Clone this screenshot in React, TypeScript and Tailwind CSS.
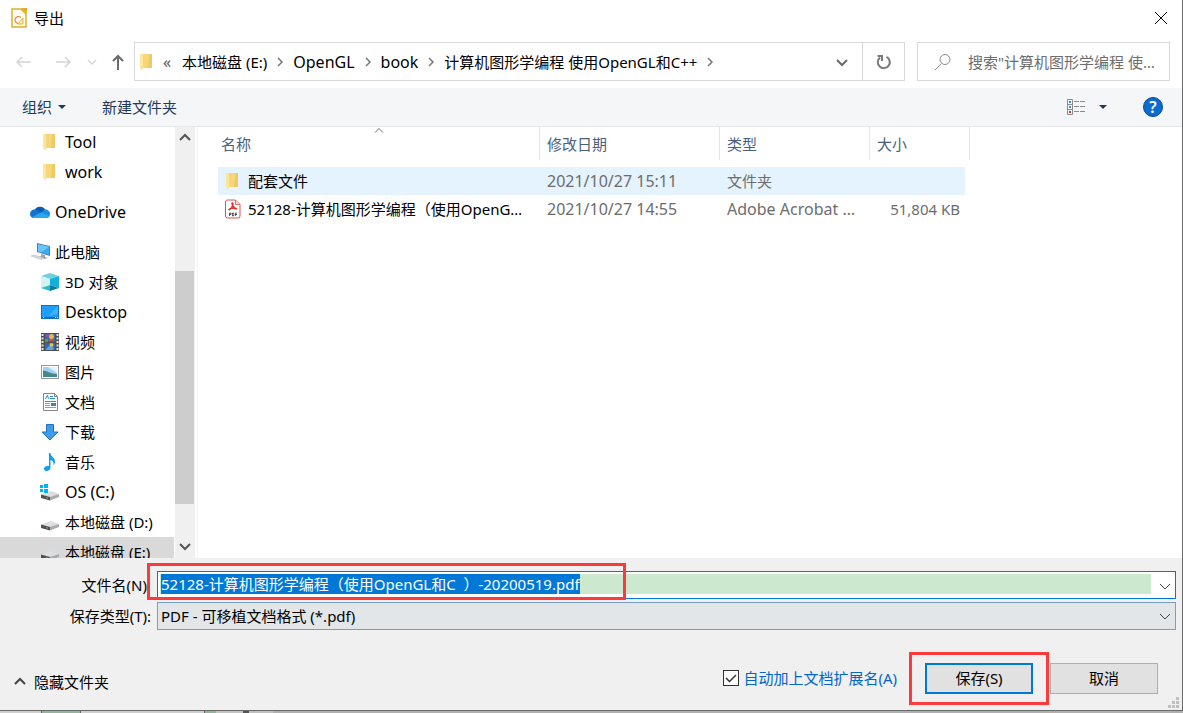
import { useEffect, useRef, useState } from "react";
import type { ReactNode } from "react";

type Place = {
  name: string;
  icon: ReactNode;
  level: 0 | 1;
  spaced?: boolean;
  active?: boolean;
};

type FileRow = {
  name: string;
  modified: string;
  type: string;
  size: string;
  icon: ReactNode;
  active?: boolean;
};

// latin text runs small next to the CJK glyphs, so latin-only labels go one step up
function labelSize(text: string): string {
  return /^[\x20-\x7e]+$/.test(text) ? "text-base leading-5" : "";
}

function FolderIcon() {
  return (
    <svg width="20" height="20" viewBox="0 0 20 20" className="shrink-0">
      <path d="M5 2h10v14H5z" fill="#f7d678" />
      <path d="M12.500 2H15v14h-4z" fill="#e9bf55" opacity=".6" />
      <path d="M3 2l3 1.500V18l-3-2z" fill="#fde9a9" />
      <path d="M3 2h2l1 1.500V18l-1 .500-2-2.500z" fill="#fce59c" />
    </svg>
  );
}

function CloudIcon() {
  return (
    <svg width="20" height="20" viewBox="0 0 20 20" className="shrink-0">
      <path d="M4.500 8a6.200 6.200 0 0 1 11 0L8 13z" fill="#0a5cb3" />
      <path d="M4.500 7.500C2 7.500 0 9.500 0 12s2 4 4 4l8-4.500C9.500 9 7 7.500 4.500 7.500z" fill="#1173cf" />
      <path d="M11 11l4-3.500c3 0 5 2 5 4.500s-1.500 4-4 4z" fill="#1a8fe0" />
      <path d="M2 15.200c3-1 6-4.200 9-4.200 3.500 0 6 2.500 8.500 3C19 15.500 17.500 16 16 16H4c-.8 0-1.500-.3-2-.8z" fill="#28a8ea" />
    </svg>
  );
}

function ComputerIcon() {
  return (
    <svg width="20" height="20" viewBox="0 0 20 20" className="shrink-0">
      <path d="M7 1l13 3v10L7 10z" fill="#5b7f99" />
      <path d="M8 2.300l11 2.500v8L8 9.200z" fill="#36aef5" />
      <path d="M8 2.300l11 2.500-8 5.400-3-1z" fill="#6ac6fa" />
      <path d="M11 12l4 1v2l3 1-4 1-5-2 2-1z" fill="#9aa5ad" />
      <path d="M1 14l3-1 10 3-3 1.500z" fill="#d5dade" stroke="#b3bac0" strokeWidth=".6" />
    </svg>
  );
}

function CubeIcon() {
  return (
    <svg width="20" height="20" viewBox="0 0 20 20" className="shrink-0">
      <path d="M1 4l9-3 9 3-9 3z" fill="#6fcfdd" />
      <path d="M1 4l9 3v6l-9 3z" fill="#d2f3f4" />
      <path d="M19 4l-9 3v6l9 3z" fill="#12b0dc" />
      <path d="M1 16l9-3v6z" fill="#2fb9c9" />
      <path d="M10 13l9 3-9 3z" fill="#087f97" />
    </svg>
  );
}

function DesktopIcon() {
  return (
    <svg width="20" height="20" viewBox="0 0 20 20" className="shrink-0">
      <rect x="1.500" y="3.500" width="17" height="13" fill="#1e9dfb" stroke="#0b72c4" />
      <path d="M18 4v8L8 14z" fill="#40b0ff" />
      <path d="M2 15.500h16" stroke="#0e5f9f" />
      <path d="M3 15.500h1M15 15.500h1M17 15.500h1" stroke="#fff" />
    </svg>
  );
}

function VideoIcon() {
  return (
    <svg width="20" height="20" viewBox="0 0 20 20" className="shrink-0">
      <path d="M1 1h18v18H1z" fill="#4f4f4f" />
      <path d="M2.500 2v16M17.500 2v16" stroke="#e4e4e4" strokeWidth="2" strokeDasharray="2 1.500" />
      <path d="M5 2h10v8H5zM5 11h10v7H5z" fill="#3466b8" />
      <path d="M6 2h4v3H6z" fill="#7d56c9" />
      <circle cx="11.500" cy="4.500" r="2.500" fill="#f3b92d" />
      <path d="M9 7h5v2H9z" fill="#d94d36" />
      <path d="M5 7h3v3H5z" fill="#46a651" />
      <circle cx="11.500" cy="13" r="2" fill="#e7c438" />
      <path d="M6 17l3-3 5 2-1 2H6z" fill="#57a9e8" />
    </svg>
  );
}

function PictureIcon() {
  return (
    <svg width="20" height="20" viewBox="0 0 20 20" className="shrink-0">
      <rect x="1.500" y="3.500" width="17" height="13" fill="#fff" stroke="#979797" />
      <path d="M3 5h14v10H3z" fill="#9fd0f5" />
      <path d="M8 5h9v6z" fill="#e4f3fc" />
      <path d="M3 8.500c4 0 6 3 14 3.500v1H3z" fill="#4c8a80" />
      <path d="M3 13h14v2H3z" fill="#3f82b3" />
    </svg>
  );
}

function DocumentIcon() {
  return (
    <svg width="20" height="20" viewBox="0 0 20 20" className="shrink-0">
      <path d="M3.500 1.500h11l3 3v14h-14z" fill="#fff" stroke="#858585" />
      <path d="M14.500 1.500v3h3" fill="none" stroke="#858585" />
      <path d="M5.500 7l2-4 1 4M10 4.500h3M10 6.500h5M5 9.500h11" stroke="#2f8fd0" fill="none" />
      <path d="M5 11.500h5M5 13.500h5M5 15.500h11" stroke="#9a9a9a" />
      <path d="M11 11h5v3h-5z" fill="#3983bd" />
    </svg>
  );
}

function DownloadIcon() {
  return (
    <svg width="20" height="20" viewBox="0 0 20 20" className="shrink-0">
      <path d="M6.500 2.500h7v7.500h4.500L10 18l-8-8h4.500z" fill="#3d9be9" stroke="#1f74c0" />
    </svg>
  );
}

function MusicIcon() {
  return (
    <svg width="20" height="20" viewBox="0 0 20 20" className="shrink-0">
      <path d="M9 1h1.500c0 3.500 4.500 4.500 4.500 8.500 0 2-1 3.500-1.500 3.500.5-3-1-4.500-3-5v7.500c0 2-2 3.500-4 3.500S4 18 4 16.500s2-3 5-2.500z" fill="#0d9ef5" />
    </svg>
  );
}

function DriveIcon({ system = false }: { system?: boolean }) {
  return (
    <svg width="20" height="20" viewBox="0 0 20 20" className="shrink-0">
      <path d="M1 12.500L11 9l8 3-9 4z" fill="#dcdee0" />
      <path d="M1 12.500l9 2.500v3.500L1 16z" fill="#4e5052" />
      <path d="M10 15l9-3v3l-9 3.500z" fill="#a9acae" />
      <path d="M6 15.500l2 .7" stroke="#3bd06b" />
      {system && (
        <g fill="#00b4f0">
          <rect x="0" y="3" width="3" height="3" />
          <rect x="4" y="2" width="4" height="4" />
          <rect x="0" y="7" width="3" height="3" />
          <rect x="4" y="7" width="4" height="4" />
        </g>
      )}
    </svg>
  );
}

function PdfIcon() {
  return (
    <svg width="20" height="20" viewBox="0 0 20 20" className="shrink-0">
      <path d="M4.500 1h8L17 5.500V17q0 2-2 2H4.500q-2 0-2-2V3q0-2 2-2z" fill="#fff" stroke="#d9534f" />
      <path d="M12.500 1v4.500H17" fill="#f8d4d2" stroke="#d9534f" strokeWidth=".8" />
      <path d="M6 11c3-1 5-7 3.500-7S10 9 14 10M6 11c0-1.500 4-2.500 8-1" fill="none" stroke="#e5322d" strokeWidth="1.500" />
      <path d="M6.500 17v-3H8v1.500H6.500M9.500 17v-3h1l.5 1.500-.5 1.500zM12.500 17v-3H14M12.500 15.500H14" fill="none" stroke="#333" strokeWidth=".8" />
    </svg>
  );
}

function AppIcon() {
  return (
    <svg width="18" height="22" viewBox="0 0 18 22" className="shrink-0">
      <path d="M2 2h9l5 5v13H2z" fill="#fffdf3" stroke="#dfae2b" strokeWidth="1.500" />
      <path d="M11 1h6v6z" fill="#dfae2b" />
      <path d="M11 10.500a3.500 3.500 0 1 0-2 6" fill="none" stroke="#e28a4b" strokeWidth="1.200" />
      <path d="M8 17l5-6v6z" fill="#fbe9ae" stroke="#e4b93f" />
    </svg>
  );
}

function Chevron({ d, className }: { d: string; className: string }) {
  return (
    <svg width="12" height="12" viewBox="0 0 12 12" fill="none" stroke="currentColor" className={`shrink-0 ${className}`}>
      <path d={d} />
    </svg>
  );
}

const DOWN = "M1 4l5 5 5-5";
const UP = "M1 8l5-5 5 5";
const RIGHT = "M4 2l4 4-4 4";

const places: Place[] = [
  { name: "Tool", icon: <FolderIcon />, level: 1 },
  { name: "work", icon: <FolderIcon />, level: 1 },
  { name: "OneDrive", icon: <CloudIcon />, level: 0, spaced: true },
  { name: "此电脑", icon: <ComputerIcon />, level: 0, spaced: true },
  { name: "3D 对象", icon: <CubeIcon />, level: 1 },
  { name: "Desktop", icon: <DesktopIcon />, level: 1 },
  { name: "视频", icon: <VideoIcon />, level: 1 },
  { name: "图片", icon: <PictureIcon />, level: 1 },
  { name: "文档", icon: <DocumentIcon />, level: 1 },
  { name: "下载", icon: <DownloadIcon />, level: 1 },
  { name: "音乐", icon: <MusicIcon />, level: 1 },
  { name: "OS (C:)", icon: <DriveIcon system />, level: 1 },
  { name: "本地磁盘 (D:)", icon: <DriveIcon />, level: 1 },
  { name: "本地磁盘 (E:)", icon: <DriveIcon />, level: 1, active: true },
];

const files: FileRow[] = [
  {
    name: "配套文件",
    modified: "2021/10/27 15:11",
    type: "文件夹",
    size: "",
    icon: <FolderIcon />,
    active: true,
  },
  {
    name: "52128-计算机图形学编程（使用OpenGL和C++）",
    modified: "2021/10/27 14:55",
    type: "Adobe Acrobat Document",
    size: "51,804 KB",
    icon: <PdfIcon />,
  },
];

const crumbs = ["本地磁盘 (E:)", "OpenGL", "book", "计算机图形学编程 使用OpenGL和C++"];

function TitleBar() {
  return (
    <header className="flex h-9 items-center justify-between pl-[10px] pr-3.5">
      <h1 className="flex items-center gap-1.5">
        <AppIcon />
        导出
      </h1>
      <button aria-label="关闭">
        <svg width="14" height="14" viewBox="0 0 14 14" fill="none" stroke="#000">
          <path d="M1 1l12 12M13 1L1 13" />
        </svg>
      </button>
    </header>
  );
}

function AddressBar() {
  return (
    <div className="flex items-center pb-[7px] pl-4 pr-3 pt-1.5">
      <div className="flex w-[118px] items-center">
        <button aria-label="后退" className="w-[39px] text-[#d5d5d5]">
          <svg width="16" height="14" viewBox="0 0 16 14" fill="none" stroke="currentColor" strokeWidth="1.500">
            <path d="M15 7H1M6 2L1 7l5 5" />
          </svg>
        </button>
        <button aria-label="前进" className="w-[32px] text-[#d5d5d5]">
          <svg width="16" height="14" viewBox="0 0 16 14" fill="none" stroke="currentColor" strokeWidth="1.500">
            <path d="M1 7h14M10 2l5 5-5 5" />
          </svg>
        </button>
        <button aria-label="最近的位置" className="w-[24px] text-[#d5d5d5]">
          <svg width="10" height="10" viewBox="0 0 10 10" fill="none" stroke="currentColor" strokeWidth="1.500">
            <path d="M1 3l4 4 4-4" />
          </svg>
        </button>
        <button aria-label="上一级" className="text-[#6b6b6b]">
          <svg width="14" height="16" viewBox="0 0 14 16" fill="none" stroke="currentColor" strokeWidth="2">
            <path d="M7 16V2M2 7l5-5 5 5" />
          </svg>
        </button>
      </div>

      <div className="flex h-[39px] min-w-0 flex-1 items-center border border-[#d9d9d9]">
        <div className="flex min-w-0 flex-1 items-center overflow-hidden whitespace-nowrap pl-0.5">
          <FolderIcon />
          <span className="w-[25px] pl-1.5 text-base leading-5 text-[#555]">«</span>
          {crumbs.map((crumb) => (
            <span key={crumb} className="flex items-center">
              <button className={labelSize(crumb)}>{crumb}</button>
              <Chevron d={RIGHT} className="mx-[7px] stroke-[1.5] text-[#777]" />
            </span>
          ))}
        </div>
        <button aria-label="以前的位置" className="flex h-full w-10 items-center justify-center text-[#6b6b6b]">
          <Chevron d={DOWN} className="stroke-2" />
        </button>
        <button aria-label="刷新" className="flex h-full w-[42px] items-center justify-center border-l border-[#d9d9d9]">
          <svg width="16" height="16" viewBox="0 0 16 16" fill="none" stroke="#7a7a7a" strokeWidth="2">
            <path d="M10.500 2.800A6 6 0 1 1 4 3.500" />
            <path d="M1.500 2H6v5" />
          </svg>
        </button>
      </div>

      <label className="ml-3 flex h-[39px] w-[253px] items-center border border-[#d9d9d9] pl-4 pr-3">
        <svg width="18" height="18" viewBox="0 0 18 18" fill="none" stroke="#8a8a8a">
          <circle cx="11" cy="6.500" r="5" />
          <path d="M7.500 10.500L1 17" />
        </svg>
        <input
          aria-label="搜索"
          placeholder={'搜索"计算机图形学编程 使用OpenGL和C++"'}
          className="ml-4 min-w-0 flex-1 text-ellipsis bg-transparent outline-none placeholder:text-[#6d6d6d]"
        />
      </label>
    </div>
  );
}

function Toolbar() {
  return (
    <div className="flex h-[39px] items-center border-b border-[#e5e7ea] bg-[#f4f6f8] pl-[22px] pr-[19px] text-[#1e395b]">
      <button className="flex items-center gap-1.5">
        组织
        <svg width="8" height="4" viewBox="0 0 8 4" fill="currentColor">
          <path d="M0 0h8L4 4z" />
        </svg>
      </button>
      <button className="ml-9">新建文件夹</button>
      <button aria-label="更改视图" className="ml-auto flex items-center gap-3.5">
        <svg width="18" height="16" viewBox="0 0 18 16" fill="none" stroke="#8b8b8b">
          <path d="M.5.5h5v15h-5zM.5 5.500h5M.5 10.500h5M7 2.500h5M13 2.500h5M7 7.500h5M13 7.500h5M7 12.500h5M13 12.500h5" />
          <path d="M2 3h2" stroke="#2b8fc4" strokeWidth="2" />
          <path d="M2 8h2" stroke="#4e9a7c" strokeWidth="2" />
          <path d="M2 13h2" stroke="#cf3c22" strokeWidth="2" />
        </svg>
        <svg width="8" height="4" viewBox="0 0 8 4" fill="currentColor">
          <path d="M0 0h8L4 4z" />
        </svg>
      </button>
      <button
        aria-label="帮助"
        className="ml-9 flex size-5 items-center justify-center rounded-full border border-[#0a4a8c] bg-[#0a6bd0] text-base leading-5 font-semibold text-white"
      >
        ?
      </button>
    </div>
  );
}

function Sidebar() {
  return (
    <nav className="flex w-[198px] shrink-0 border-r border-[#f3f3f3]">
      <ul className="w-[174px] overflow-hidden">
        {places.map((place) => (
          <li key={place.name} className={place.spaced ? "mt-2.5" : ""}>
            <a
              href="#"
              className={`flex h-[30px] items-center gap-[5px] ${place.level === 1 ? "pl-10" : "pl-[30px]"} ${
                place.active ? "bg-[#d9d9d9]" : ""
              }`}
            >
              {place.icon}
              <span className={labelSize(place.name)}>{place.name}</span>
            </a>
          </li>
        ))}
      </ul>
      <div className="ml-px flex w-5 flex-col items-center justify-between bg-[#f0f0f0] pb-1.5 pt-[5px] text-[#555]">
        <Chevron d={UP} className="stroke-2" />
        <div className="mb-9 mt-auto h-[233px] w-full border-r border-[#f0f0f0] bg-[#cdcdcd]" />
        <Chevron d={DOWN} className="stroke-2" />
      </div>
    </nav>
  );
}

function FileTable() {
  return (
    <div className="min-w-0 flex-1 overflow-hidden pl-5">
      <table className="w-[752px] table-fixed border-collapse text-left">
        <thead className="text-[#4c607a]">
          <tr className="align-top">
            <th className="h-10 w-[322px] p-0 font-normal">
              <div className="relative flex h-[33px] items-center border-r border-[#e5e5e5] pl-[3px]">
                名称
                <svg
                  width="10"
                  height="6"
                  viewBox="0 0 10 6"
                  fill="none"
                  stroke="#6d6d6d"
                  className="absolute left-1/2 top-0 -translate-x-1/2"
                >
                  <path d="M1 5.500l4-4 4 4" />
                </svg>
              </div>
            </th>
            <th className="w-[180px] p-0 font-normal">
              <div className="flex h-[33px] items-center border-r border-[#e5e5e5] pl-[7px]">修改日期</div>
            </th>
            <th className="w-[150px] p-0 font-normal">
              <div className="flex h-[33px] items-center border-r border-[#e5e5e5] pl-[7px]">类型</div>
            </th>
            <th className="w-[95px] p-0 font-normal">
              <div className="flex h-[33px] items-center pl-[7px]">大小</div>
            </th>
            <th className="w-[5px] p-0">
              <div className="h-[33px] border-r border-[#e5e5e5]" />
            </th>
          </tr>
        </thead>
        <tbody>
          {files.map((file) => {
            const cell = file.active ? "bg-[#e5f3ff]" : "";
            return (
              <tr key={file.name} className="h-7 text-[#6d6d6d]">
                <td className={`p-0 pl-[5px] pr-3 text-black ${cell}`}>
                  <div className="flex items-center gap-[5px]">
                    {file.icon}
                    <span className="truncate">{file.name}</span>
                  </div>
                </td>
                <td className={`p-0 pl-[7px] ${labelSize(file.modified)} ${cell}`}>{file.modified}</td>
                <td className={`truncate p-0 pl-[7px] pr-3 ${labelSize(file.type)} ${cell}`}>{file.type}</td>
                <td className={`p-0 pr-[5px] text-right ${cell}`}>{file.size}</td>
                <td className="p-0" />
              </tr>
            );
          })}
        </tbody>
      </table>
    </div>
  );
}

function SaveForm() {
  const nameRef = useRef<HTMLInputElement>(null);
  const [fileName, setFileName] = useState("52128-计算机图形学编程（使用OpenGL和C  ）-20200519.pdf");
  const [autoExtension, setAutoExtension] = useState(true);

  useEffect(() => {
    nameRef.current?.focus();
    nameRef.current?.select();
  }, []);

  return (
    <form className="bg-[#f0f0f0] pt-[13px]" onSubmit={(event) => event.preventDefault()}>
      <div className="flex items-center pr-1.5">
        <label htmlFor="file-name" className="w-[157px] shrink-0 pr-1.5 text-right">
          文件名(N):
        </label>
        <div className="relative flex h-7 flex-1 items-start border border-[#0078d7] bg-white pl-0.5 pt-0.5">
          <input
            id="file-name"
            ref={nameRef}
            value={fileName}
            onChange={(event) => setFileName(event.target.value)}
            className="h-5 min-w-0 flex-1 bg-[#cce8cf] pl-px leading-5 outline-none selection:bg-[#0078d7] selection:text-white"
          />
          <Chevron d={DOWN} className="ml-2 mr-1 self-center text-[#444]" />
          <div className="pointer-events-none absolute -left-[11px] -top-[9px] h-[37px] w-[479px] border-3 border-[#fb3b3b]" />
        </div>
      </div>

      <div className="mt-[3px] flex items-center pr-1.5">
        <label htmlFor="file-type" className="w-[157px] shrink-0 pr-1.5 text-right">
          保存类型(T):
        </label>
        <div className="relative flex-1">
          <select
            id="file-type"
            className="block h-7 w-full appearance-none border border-[#7a9ebd] bg-[#e2e6e9] pl-[3px] outline-none"
          >
            <option>PDF - 可移植文档格式 (*.pdf)</option>
          </select>
          <Chevron d={DOWN} className="pointer-events-none absolute right-[5px] top-2 text-[#444]" />
        </div>
      </div>

      <div className="relative flex h-20 items-center pl-3.5 pr-6 pt-4">
        <button type="button" className="flex items-center gap-2 pt-2">
          <Chevron d={UP} className="stroke-2 text-[#444]" />
          隐藏文件夹
        </button>
        <label className="ml-auto mr-7 flex items-center gap-1 text-[#0066cc]">
          <span className="relative flex">
            <input
              type="checkbox"
              checked={autoExtension}
              onChange={(event) => setAutoExtension(event.target.checked)}
              className="peer size-4 appearance-none border border-[#333] bg-white"
            />
            <svg
              width="16"
              height="16"
              viewBox="0 0 16 16"
              fill="none"
              stroke="#333"
              strokeWidth="1.500"
              className="pointer-events-none absolute inset-0 hidden peer-checked:block"
            >
              <path d="M3 8l3.500 3.500L13 5" />
            </svg>
          </span>
          自动加上文档扩展名(A)
        </label>
        <div className="relative">
          <button type="submit" className="block h-[31px] w-[108px] border-2 border-[#0078d7] bg-[#e1e1e1]">
            保存(S)
          </button>
          <div className="pointer-events-none absolute -left-4 -top-[11px] h-[53px] w-[140px] border-3 border-[#fb3b3b]" />
        </div>
        <button type="button" className="ml-[17px] h-[31px] w-[108px] border border-[#adadad] bg-[#e1e1e1]">
          取消
        </button>
        <svg
          width="11"
          height="11"
          viewBox="0 0 11 11"
          fill="#bfbfbf"
          className="absolute bottom-0.5 right-[3px]"
        >
          <path d="M8 0h3v3H8zM4 4h3v3H4zM8 4h3v3H8zM0 8h3v3H0zM4 8h3v3H4zM8 8h3v3H8z" />
        </svg>
      </div>
    </form>
  );
}

export default function App() {
  return (
    <div className="flex h-screen flex-col bg-[#b0b0b0] font-['Noto_Sans','Noto_Sans_CJK_SC',sans-serif] text-[15px] leading-5 text-black">
      <main className="flex min-h-0 flex-1 flex-col border-b border-r border-[#6a6a6a] bg-white">
        <TitleBar />
        <AddressBar />
        <Toolbar />
        <div className="flex min-h-0 flex-1 overflow-hidden">
          <Sidebar />
          <FileTable />
        </div>
        <SaveForm />
      </main>
      {/* sliver of the window behind the dialog */}
      <div className="flex h-0.5">
        <div className="w-[41px] bg-[#d0d0d0]" />
        <div className="w-10 border-x border-[#666] bg-[#8fb59b]" />
        <div className="w-[123px] bg-[#cfcfcf]" />
        <div className="w-3 border-l border-[#666] bg-[#8fb59b]" />
        <div className="w-[27px] bg-[#c4c4c4]" />
        <div className="w-1.5 bg-[#555]" />
        <div className="w-6 bg-[#c0c0c0]" />
      </div>
    </div>
  );
}
